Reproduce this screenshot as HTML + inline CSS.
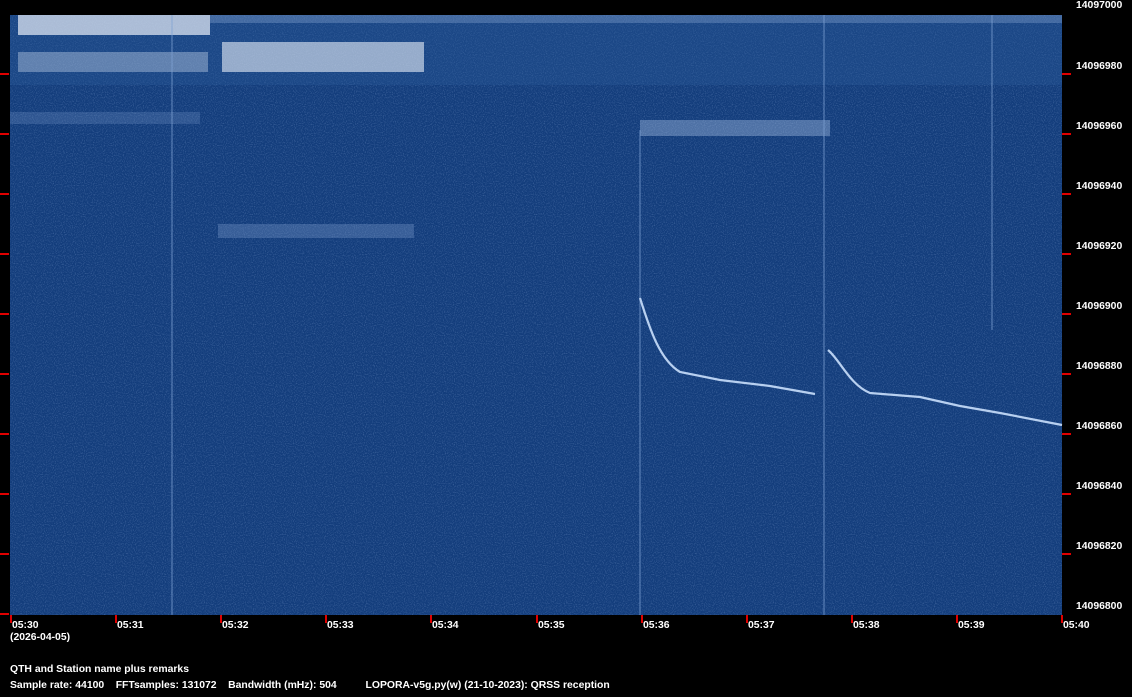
<!DOCTYPE html>
<html><head><style>
body{margin:0;background:#000;width:1132px;height:697px;overflow:hidden;position:relative;font-family:"Liberation Sans",sans-serif;font-weight:bold;font-size:10.4px;color:#fff}
.t{position:absolute;white-space:pre;line-height:12px}
</style></head><body>
<svg width="1132" height="697" style="position:absolute;left:0;top:0">
<defs>
<filter id="n" x="0" y="0" width="100%" height="100%">
<feTurbulence type="fractalNoise" baseFrequency="0.9" numOctaves="1" seed="3"/>
<feColorMatrix values="0 0 0 0 0.4  0 0 0 0 0.55  0 0 0 0 0.85  0 0 0 1.2 -0.55"/>
</filter>
</defs>
<rect x="10" y="15" width="1052" height="600" fill="#133d7c"/>
<rect x="10" y="15" width="1052" height="600" filter="url(#n)" opacity="0.6"/>
<rect x="10" y="15" width="1052" height="70" fill="#2a5c9a" opacity="0.35"/>
<rect x="18" y="15" width="192" height="20" fill="#e8eef8" opacity="0.7"/>
<rect x="18" y="52" width="190" height="20" fill="#c8d6ec" opacity="0.4"/>
<rect x="222" y="42" width="202" height="30" fill="#e8eef8" opacity="0.6"/>
<rect x="10" y="112" width="190" height="12" fill="#7f9fcf" opacity="0.25"/>
<rect x="218" y="224" width="196" height="14" fill="#8aa8d8" opacity="0.3"/>
<rect x="640" y="120" width="190" height="16" fill="#a8c0e4" opacity="0.4"/>
<rect x="210" y="15" width="852" height="8" fill="#9fb8e0" opacity="0.3"/>
<g stroke="#7fa2d4" stroke-width="1.5" opacity="0.5"><line x1="172" y1="15" x2="172" y2="615"/><line x1="824" y1="15" x2="824" y2="615"/><line x1="640" y1="130" x2="640" y2="615"/><line x1="992" y1="15" x2="992" y2="330"/></g>
<g fill="none" stroke="#b8d0f0" stroke-width="2.2">
<path d="M640 298 C650 330 660 360 680 372 L720 380 L770 386 L815 394"/>
<path d="M828 350 C840 360 850 385 870 393 L920 397 L960 406 L1000 413 L1062 425"/>
</g>
<g fill="#e00000">
<rect x="0" y="73" width="9" height="2"/><rect x="0" y="133" width="9" height="2"/><rect x="0" y="193" width="9" height="2"/><rect x="0" y="253" width="9" height="2"/><rect x="0" y="313" width="9" height="2"/><rect x="0" y="373" width="9" height="2"/><rect x="0" y="433" width="9" height="2"/><rect x="0" y="493" width="9" height="2"/><rect x="0" y="553" width="9" height="2"/><rect x="0" y="613" width="9" height="2"/>
<rect x="1062" y="73" width="9" height="2"/><rect x="1062" y="133" width="9" height="2"/><rect x="1062" y="193" width="9" height="2"/><rect x="1062" y="253" width="9" height="2"/><rect x="1062" y="313" width="9" height="2"/><rect x="1062" y="373" width="9" height="2"/><rect x="1062" y="433" width="9" height="2"/><rect x="1062" y="493" width="9" height="2"/><rect x="1062" y="553" width="9" height="2"/>
<rect x="10" y="615" width="2" height="8"/><rect x="115" y="615" width="2" height="8"/><rect x="220" y="615" width="2" height="8"/><rect x="325" y="615" width="2" height="8"/><rect x="430" y="615" width="2" height="8"/><rect x="536" y="615" width="2" height="8"/><rect x="641" y="615" width="2" height="8"/><rect x="746" y="615" width="2" height="8"/><rect x="851" y="615" width="2" height="8"/><rect x="956" y="615" width="2" height="8"/><rect x="1061" y="615" width="2" height="8"/>
</g>
</svg>
<div class="t" style="left:1076px;top:0px">14097000</div>
<div class="t" style="left:1076px;top:61px">14096980</div>
<div class="t" style="left:1076px;top:121px">14096960</div>
<div class="t" style="left:1076px;top:181px">14096940</div>
<div class="t" style="left:1076px;top:241px">14096920</div>
<div class="t" style="left:1076px;top:301px">14096900</div>
<div class="t" style="left:1076px;top:361px">14096880</div>
<div class="t" style="left:1076px;top:421px">14096860</div>
<div class="t" style="left:1076px;top:481px">14096840</div>
<div class="t" style="left:1076px;top:541px">14096820</div>
<div class="t" style="left:1076px;top:601px">14096800</div>
<div class="t" style="left:12px;top:620px">05:30</div>
<div class="t" style="left:117px;top:620px">05:31</div>
<div class="t" style="left:222px;top:620px">05:32</div>
<div class="t" style="left:327px;top:620px">05:33</div>
<div class="t" style="left:432px;top:620px">05:34</div>
<div class="t" style="left:538px;top:620px">05:35</div>
<div class="t" style="left:643px;top:620px">05:36</div>
<div class="t" style="left:748px;top:620px">05:37</div>
<div class="t" style="left:853px;top:620px">05:38</div>
<div class="t" style="left:958px;top:620px">05:39</div>
<div class="t" style="left:1063px;top:620px">05:40</div>
<div class="t" style="left:10px;top:632px">(2026-04-05)</div>
<div class="t" style="left:10px;top:664px">QTH and Station name plus remarks</div>
<div class="t" style="left:10px;top:680px">Sample rate: 44100    FFTsamples: 131072    Bandwidth (mHz): 504          LOPORA-v5g.py(w) (21-10-2023): QRSS reception</div>
</body></html>
